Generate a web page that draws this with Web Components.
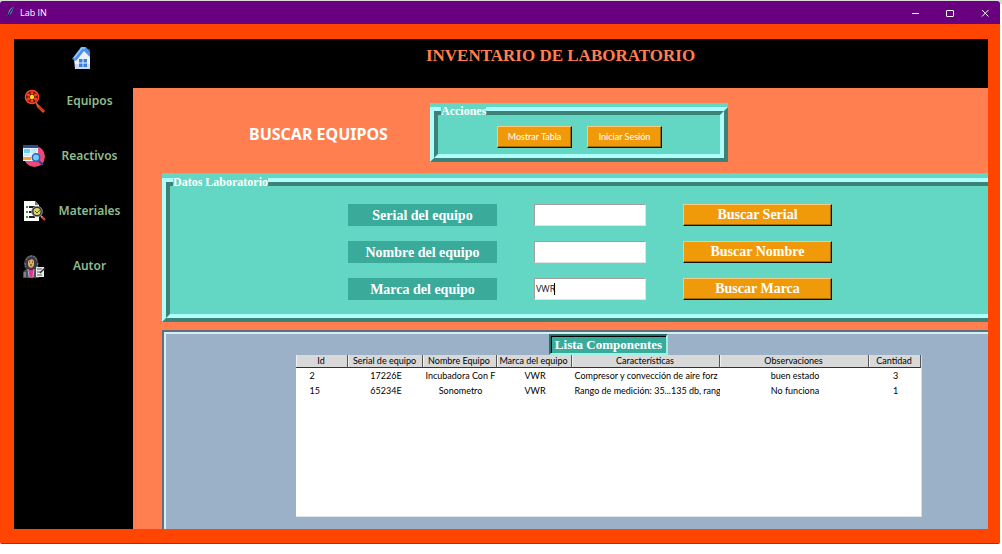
<!DOCTYPE html>
<html lang="es">
<head>
<meta charset="utf-8">
<title>Lab IN</title>
<style>
  body { margin: 0; background: #fff; font-family: "Noto Sans", sans-serif; }
</style>
</head>
<body>
<lab-window></lab-window>
<script>
const define = (name, html, init) => {
  const t = document.createElement('template');
  t.innerHTML = html;
  customElements.define(name, class extends HTMLElement {
    connectedCallback() {
      if (this.shadowRoot) return;
      const root = this.attachShadow({ mode: 'open' });
      root.append(t.content.cloneNode(true));
      if (init) init(this, root);
    }
  });
};

/* Title bar with the window controls */
define('lab-titlebar', `
<style>
  :host { display: flex; align-items: center; height: 23px; background: #68007f; color: #fff; border-radius: 3px 3px 0 0; }
  .feather { width: 8px; height: 11px; margin: 0 5px 0 6px; }
  .name { flex: 1; font: 9px/12px "Open Sans", "Noto Sans", sans-serif; padding-left: 1px; }
  .controls { display: flex; gap: 5px; }
  button { width: 30px; height: 22px; padding: 0; border: 0; background: none; color: #fff; display: grid; place-items: center; }
</style>
<svg class="feather" viewBox="0 0 8 11"><path d="M7.500 0C4 1 2.300 3.500 2 7.500L1 10.500h1L3 8.500C5.500 7 7 4 7.500 0z" fill="#4f93bd"/><path d="M6.500 1.500C4.500 4 3 7 1.500 10.800" stroke="#10202c" stroke-width="1.200" fill="none"/></svg>
<span class="name">Lab IN</span>
<div class="controls">
  <button aria-label="Minimizar"><svg width="8" height="8"><path d="M1 4.500h7" stroke="#fff"/></svg></button>
  <button aria-label="Maximizar"><svg width="8" height="8"><rect x=".5" y="1.500" width="7" height="6" rx=".5" stroke="#fff" fill="none"/></svg></button>
  <button aria-label="Cerrar"><svg width="8" height="8"><path d="M1 1l6.500 6.500M7.500 1L1 7.500" stroke="#fff"/></svg></button>
</div>`);

/* Side navigation entry */
define('lab-nav-item', `
<style>
  :host { display: block; }
  a { display: grid; grid-template-columns: 24px 1fr; align-items: center; height: 30px; padding-left: 8px; color: #8fbc8f; text-decoration: none; font: 600 12px/16px "Noto Sans", sans-serif; text-align: center; }
</style>
<a href="#"><slot name="icon"></slot><slot></slot></a>`);

define('lab-sidebar', `
<style>
  :host { display: block; width: 119px; flex: none; background: #000; }
  .home { display: block; width: 20px; height: 24px; margin: 7px 0 16px 58px; }
  nav { display: grid; gap: 25px; }
  svg { display: block; width: 24px; height: 24px; }
  .home svg { width: 20px; }
</style>
<a class="home" href="#" aria-label="Inicio"><svg viewBox="0 0 20 24">
  <path d="M15 3h3v8h-3z" fill="#5a3a30"/><path d="M2 12l9-9 7 6v14H3z" fill="#e9f1ff"/><path d="M3 18h15v5H3z" fill="#c9dcfa"/>
  <path d="M0 13L9 1h5l4 5v5l-6-6-8 10z" fill="#4b91ec"/><path d="M2 12l8-10h3" stroke="#9bc9ff" stroke-width="1.500" fill="none"/>
  <path d="M7 13h3.500v3.500H7zM11.500 13H15v3.500h-3.500zM7 17.500h3.500V21H7zM11.500 17.500H15V21h-3.500z" fill="#397fdc"/></svg></a>
<nav>
<lab-nav-item><svg slot="icon" viewBox="0 0 24 24">
  <path d="M14 15l3 1 6 6-2 2-6-6z" fill="#ff421a"/><path d="M14 14l2 2" stroke="#888" stroke-width="1.500"/><path d="M17 18l4 4" stroke="#b42b10"/>
  <circle cx="10" cy="8" r="6.500" fill="#401008" stroke="#ff461c" stroke-width="1.500"/>
  <g fill="#ef3f1b"><circle cx="10" cy="4" r="1.700"/><circle cx="13.500" cy="6" r="1.700"/><circle cx="13.500" cy="10" r="1.700"/><circle cx="10" cy="12" r="1.700"/><circle cx="6.500" cy="10" r="1.700"/><circle cx="6.500" cy="6" r="1.700"/></g>
  <circle cx="10" cy="8" r="2.200" fill="#ffdb21"/></svg>Equipos</lab-nav-item>
<lab-nav-item><svg slot="icon" viewBox="0 0 24 24">
  <circle cx="12.500" cy="12.500" r="10.500" fill="#ef4778"/>
  <path d="M1 1h15v16H1z" fill="#e4f6ff"/><path d="M1 1h15v3H1z" fill="#294d91"/><path d="M2 5h6v4H2z" fill="#69cff4"/><path d="M9 6h6M9 8h5M2 11h6" stroke="#9edbf4"/><path d="M1 13h8v3H1z" fill="#ff9d2f"/>
  <circle cx="14" cy="13.500" r="3.700" fill="#75ccfa" stroke="#2563ba" stroke-width="1.500"/><path d="M17 17l4 4" stroke="#254591" stroke-width="2"/></svg>Reactivos</lab-nav-item>
<lab-nav-item><svg slot="icon" viewBox="0 0 24 24">
  <path d="M2 2h11l4 4v16H2z" fill="#fff"/><path d="M13 2v4h4z" fill="#777"/><path d="M7 8h7M7 13h5M7 18h6" stroke="#222" stroke-width="2"/><path d="M4 8h2M4 13h2M4 18h2" stroke="#469641" stroke-width="2"/>
  <circle cx="15" cy="12.500" r="4.500" fill="#d7dc55" stroke="#343040" stroke-width="2"/><circle cx="15" cy="12.500" r="5.300" fill="none" stroke="#bcb3ca" stroke-width=".8"/><path d="M13 12l2 2 3-3" stroke="#485d25" fill="none"/><path d="M19 17l2 2" stroke="#aaa" stroke-width="2"/><path d="M20 18l3 3" stroke="#e43c47" stroke-width="2"/></svg>Materiales</lab-nav-item>
<lab-nav-item><svg slot="icon" viewBox="0 0 24 24">
  <path d="M1 24v-6l4-4h8l4 4v6z" fill="#4a4c54"/><path d="M3 14C1 10 2 2 9 1c7 0 8 7 7 13l-4 2H6z" fill="#3b3b42"/>
  <path d="M4 6l2-3 3-1 4 1 2 4M3 9l1 4M16 9l-1 4" stroke="#85858f" fill="none" stroke-dasharray="2 1"/>
  <path d="M6 7l4-2 2 2v3c0 5-6 5-6 0z" fill="#e0ab68"/><path d="M7 8h1M10 8h1M8 11h2" stroke="#422d20"/><path d="M7 16h4v8H7z" fill="#e5309a"/><path d="M6 15l1 8M12 15l-1 8M3 18v5" stroke="#b5b7bd"/>
  <path d="M14 13h8v10h-8z" fill="#e8ecec"/><path d="M15 15h5M15 18h4M15 21h5" stroke="#555"/><path d="M23 14l-5 5" stroke="#333" stroke-width="1.500"/></svg>Autor</lab-nav-item>
</nav>`);

/* Teal frame with a ridge border and a caption set into it */
define('lab-frame', `
<style>
  :host { display: block; box-sizing: border-box; background: #63d7c4; padding-top: 4px; }
  fieldset { position: relative; min-width: 0; margin: 0; padding: 0; border: 4px solid; border-color: #afffff #3c8277 #3c8277 #afffff; }
  .inner { border: 4px solid; border-color: #3c8277 #afffff #afffff #3c8277; }
  legend { position: absolute; top: -4px; left: 7px; height: 8px; background: #63d7c4; padding: 0; color: #fff; font: bold 12px/9px "Liberation Serif", serif; white-space: nowrap; }
</style>
<fieldset><legend></legend><div class="inner"><slot></slot></div></fieldset>`,
(el, root) => { root.querySelector('legend').textContent = el.getAttribute('caption'); });

define('lab-button', `
<style>
  :host { display: block; }
  button { display: block; box-sizing: border-box; width: 100%; height: 22px; padding: 0 2px; border: 1px solid; border-color: #f7cb7e #111 #111 #f7cb7e; box-shadow: inset -1px -1px #a3680a; background: #f09a0a; color: #fff; font: bold 14px/20px "Liberation Serif", serif; white-space: nowrap; }
  :host([small]) button { font: 9px/20px Lato, "Noto Sans", sans-serif; }
</style>
<button type="button"><slot></slot></button>`);

/* One search row: label, text box and its button */
define('lab-search-row', `
<style>
  :host { display: grid; grid-template-columns: 149px 112px 149px; gap: 37px; justify-content: center; }
  label { background: #3aab9b; color: #fff; font: bold 14px/23px "Liberation Serif", serif; text-align: center; height: 22px; }
  .box { position: relative; }
  input { display: block; box-sizing: border-box; width: 100%; height: 22px; border: 1px solid; border-color: #a0a0a0 #e3e3e3 #e3e3e3 #a0a0a0; padding: 0 1px 2px; background: #fff; color: #111; font: 9px/16px "Open Sans", "Noto Sans", sans-serif; outline: 0; }
  .caret { position: absolute; left: 20px; top: 5px; width: 1px; height: 12px; background: #000; }
</style>
<label for="q"></label><div class="box"><input id="q" type="text"></div><lab-button></lab-button>`,
(el, root) => {
  root.querySelector('label').textContent = el.getAttribute('label');
  root.querySelector('lab-button').textContent = el.getAttribute('action');
  const value = el.getAttribute('value');
  if (value) {
    root.querySelector('input').value = value;
    const caret = document.createElement('span');
    caret.className = 'caret';
    root.querySelector('.box').append(caret);
  }
});

define('lab-table', `
<style>
  :host { display: block; box-sizing: border-box; width: 626px; height: 162px; background: #fff; border-right: 1px solid #d5dde5; border-bottom: 1px solid #e3e3e3; }
  table { width: 100%; table-layout: fixed; border-collapse: separate; border-spacing: 0; font: 9px/12px Lato, "Noto Sans", sans-serif; color: #000; }
  th, td { padding: 0 1px 0 3px; text-align: center; white-space: nowrap; overflow: hidden; font-weight: 400; }
  th { height: 12px; padding: 0; background: #d9d9d9; border-right: 1px solid #555; border-bottom: 1px solid #333; box-shadow: inset 1px 0 #f0f0f0; }
  td { height: 15px; }
  td.left { text-align: left; }
  td:first-child { padding-left: 14px; text-align: left; }
</style>
<table>
  <colgroup><col style="width:52px"><col style="width:75px"><col style="width:74px"><col style="width:75px"><col style="width:148px"><col style="width:149px"><col style="width:52px"></colgroup>
  <thead><tr><th>Id</th><th>Serial de equipo</th><th>Nombre Equipo</th><th>Marca del equipo</th><th>Características</th><th>Observaciones</th><th>Cantidad</th></tr></thead>
  <tbody>
    <tr><td>2</td><td>17226E</td><td class="left">Incubadora Con F</td><td>VWR</td><td class="left">Compresor y convección de aire forz</td><td>buen estado</td><td>3</td></tr>
    <tr><td>15</td><td>65234E</td><td>Sonometro</td><td>VWR</td><td class="left">Rango de medición: 35...135 db, rang</td><td>No funciona</td><td>1</td></tr>
  </tbody>
</table>`);

/* The list panel runs on past the window's right edge */
define('lab-list', `
<style>
  :host { display: flex; flex-direction: column; align-items: center; box-sizing: border-box; flex: 1; background: #9bb1c8; border: 2px solid #5f707c; border-bottom: 0; box-shadow: inset 2px 2px #d3f0f4; }
  h2 { margin: 2px 0 0; box-sizing: border-box; height: 21px; padding: 0 4px; border: 2px solid; border-color: #276d62 #9cf3e3 #9cf3e3 #276d62; box-shadow: inset 1px 1px #000; background: #3aab9b; color: #fff; font: bold 13px/17px "Liberation Serif", serif; }
</style>
<h2>Lista Componentes</h2>
<lab-table></lab-table>`);

define('lab-main', `
<style>
  :host { display: flex; flex-direction: column; flex: 1; min-width: 0; overflow: hidden; }
  header { height: 49px; box-sizing: border-box; padding-top: 7px; background: #000; text-align: center; }
  h1 { margin: 0; color: #ff7f50; font: bold 17px/20px "Liberation Serif", serif; }
  main { flex: 1; display: flex; flex-direction: column; background: #ff7f50; padding: 15px 0 0 29px; }
  .top { display: flex; align-items: flex-start; gap: 42px; padding-left: 87px; }
  h2 { margin: 0; width: 139px; padding-top: 20px; color: #fff; font: bold 16px/22px "Noto Sans", sans-serif; white-space: nowrap; }
  .actions { width: 298px; }
  .buttons { display: flex; gap: 15px; padding: 11px 0 6px 59px; height: 22px; }
  .buttons lab-button { width: 75px; }
  .data { margin: 11px -30px 8px 0; padding-top: 5px; }
  .rows { display: grid; gap: 15px; padding: 18px 0 14px; }
  lab-list { margin-right: -67px; }
</style>
<header><h1>INVENTARIO DE LABORATORIO</h1></header>
<main>
  <div class="top">
    <h2>BUSCAR EQUIPOS</h2>
    <lab-frame class="actions" caption="Acciones"><div class="buttons"><lab-button small>Mostrar Tabla</lab-button><lab-button small>Iniciar Sesión</lab-button></div></lab-frame>
  </div>
  <lab-frame class="data" caption="Datos Laboratorio"><div class="rows">
    <lab-search-row label="Serial del equipo" action="Buscar Serial"></lab-search-row>
    <lab-search-row label="Nombre del equipo" action="Buscar Nombre"></lab-search-row>
    <lab-search-row label="Marca del equipo" action="Buscar Marca" value="VWR"></lab-search-row>
  </div></lab-frame>
  <lab-list></lab-list>
</main>`);

define('lab-window', `
<style>
  :host { display: flex; flex-direction: column; box-sizing: border-box; min-height: 100vh; padding: 1px 2px 10px 0; background: linear-gradient(#dcdcdc 4px, #fff 4px); }
  .body { flex: 1; display: flex; background: #ff4500; padding: 15px 12px 14px 14px; border-bottom: 1px solid #b52a10; border-radius: 0 0 2px 2px; }
</style>
<lab-titlebar></lab-titlebar>
<div class="body"><lab-sidebar></lab-sidebar><lab-main></lab-main></div>`);
</script>
</body>
</html>
